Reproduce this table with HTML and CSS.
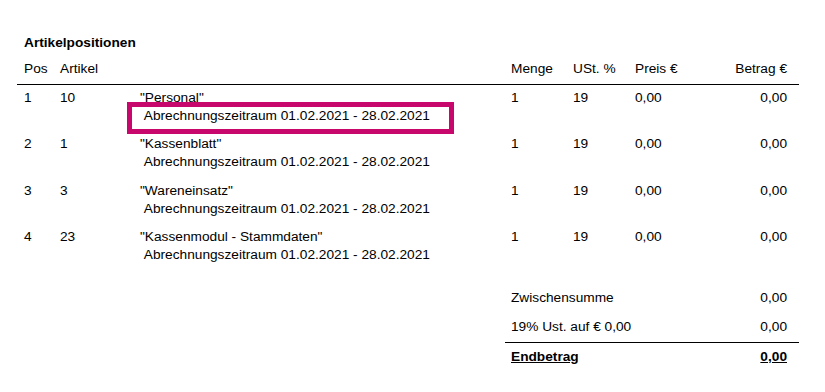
FILE: index.html
```html
<!DOCTYPE html>
<html lang="de">
<head>
<meta charset="utf-8">
<title>Artikelpositionen</title>
<link rel="stylesheet" href="styles.css">
</head>
<body>
<div class="page">
  <h2 class="title">Artikelpositionen</h2>
  <div class="grid head">
    <div>Pos</div>
    <div>Artikel</div>
    <div></div>
    <div>Menge</div>
    <div>USt. %</div>
    <div>Preis €</div>
    <div class="r">Betrag €</div>
  </div>
  <div class="rows">
    <div class="grid row">
      <div>1</div>
      <div>10</div>
      <div class="desc">"Personal"<br>&nbsp;Abrechnungszeitraum 01.02.2021 - 28.02.2021<span class="mark"></span></div>
      <div>1</div>
      <div>19</div>
      <div>0,00</div>
      <div class="r">0,00</div>
    </div>
    <div class="grid row">
      <div>2</div>
      <div>1</div>
      <div class="desc">"Kassenblatt"<br>&nbsp;Abrechnungszeitraum 01.02.2021 - 28.02.2021</div>
      <div>1</div>
      <div>19</div>
      <div>0,00</div>
      <div class="r">0,00</div>
    </div>
    <div class="grid row">
      <div>3</div>
      <div>3</div>
      <div class="desc">"Wareneinsatz"<br>&nbsp;Abrechnungszeitraum 01.02.2021 - 28.02.2021</div>
      <div>1</div>
      <div>19</div>
      <div>0,00</div>
      <div class="r">0,00</div>
    </div>
    <div class="grid row">
      <div>4</div>
      <div>23</div>
      <div class="desc">"Kassenmodul - Stammdaten"<br>&nbsp;Abrechnungszeitraum 01.02.2021 - 28.02.2021</div>
      <div>1</div>
      <div>19</div>
      <div>0,00</div>
      <div class="r">0,00</div>
    </div>
  </div>
  <div class="summary">
    <div class="sline"><span>Zwischensumme</span><span>0,00</span></div>
    <div class="sline tax"><span>19% Ust. auf € 0,00</span><span>0,00</span></div>
    <div class="sline total"><span>Endbetrag</span><span>0,00</span></div>
  </div>
</div>
</body>
</html>
```
FILE: styles.css
```css
html, body {
  margin: 0;
  padding: 0;
  background: #ffffff;
}
body {
  font-family: "Liberation Sans", Arial, sans-serif;
  font-size: 13.7px;
  line-height: 18px;
  color: #000000;
}
.page {
  width: 782px;
  margin-left: 17px;
  padding-top: 34px;
}
.title {
  margin: 0 0 8px 7px;
  font-size: 13.7px;
  line-height: 18px;
  font-weight: bold;
}
.grid {
  display: grid;
  grid-template-columns: 36px 80px 371px 62px 62px 65px 87px;
  padding: 0 12px 0 7px;
}
.head {
  padding-bottom: 6px;
  border-bottom: 1px solid #000;
}
.r {
  text-align: right;
}
.rows {
  display: flex;
  flex-direction: column;
  gap: 10.3px;
  padding-top: 4px;
}
.desc {
  position: relative;
  white-space: nowrap;
}
.mark {
  position: absolute;
  left: -13px;
  top: 13px;
  width: 327px;
  height: 32px;
  box-sizing: border-box;
  border: 5px solid #c8076d;
}
.summary {
  margin-left: 488px;
  margin-top: 25px;
}
.sline {
  display: flex;
  justify-content: space-between;
  padding: 0 12px 0 6px;
}
.tax {
  margin-top: 11px;
  padding-bottom: 6px;
  border-bottom: 1px solid #000;
}
.total {
  padding-top: 5px;
  font-weight: bold;
  text-decoration: underline;
}
```
